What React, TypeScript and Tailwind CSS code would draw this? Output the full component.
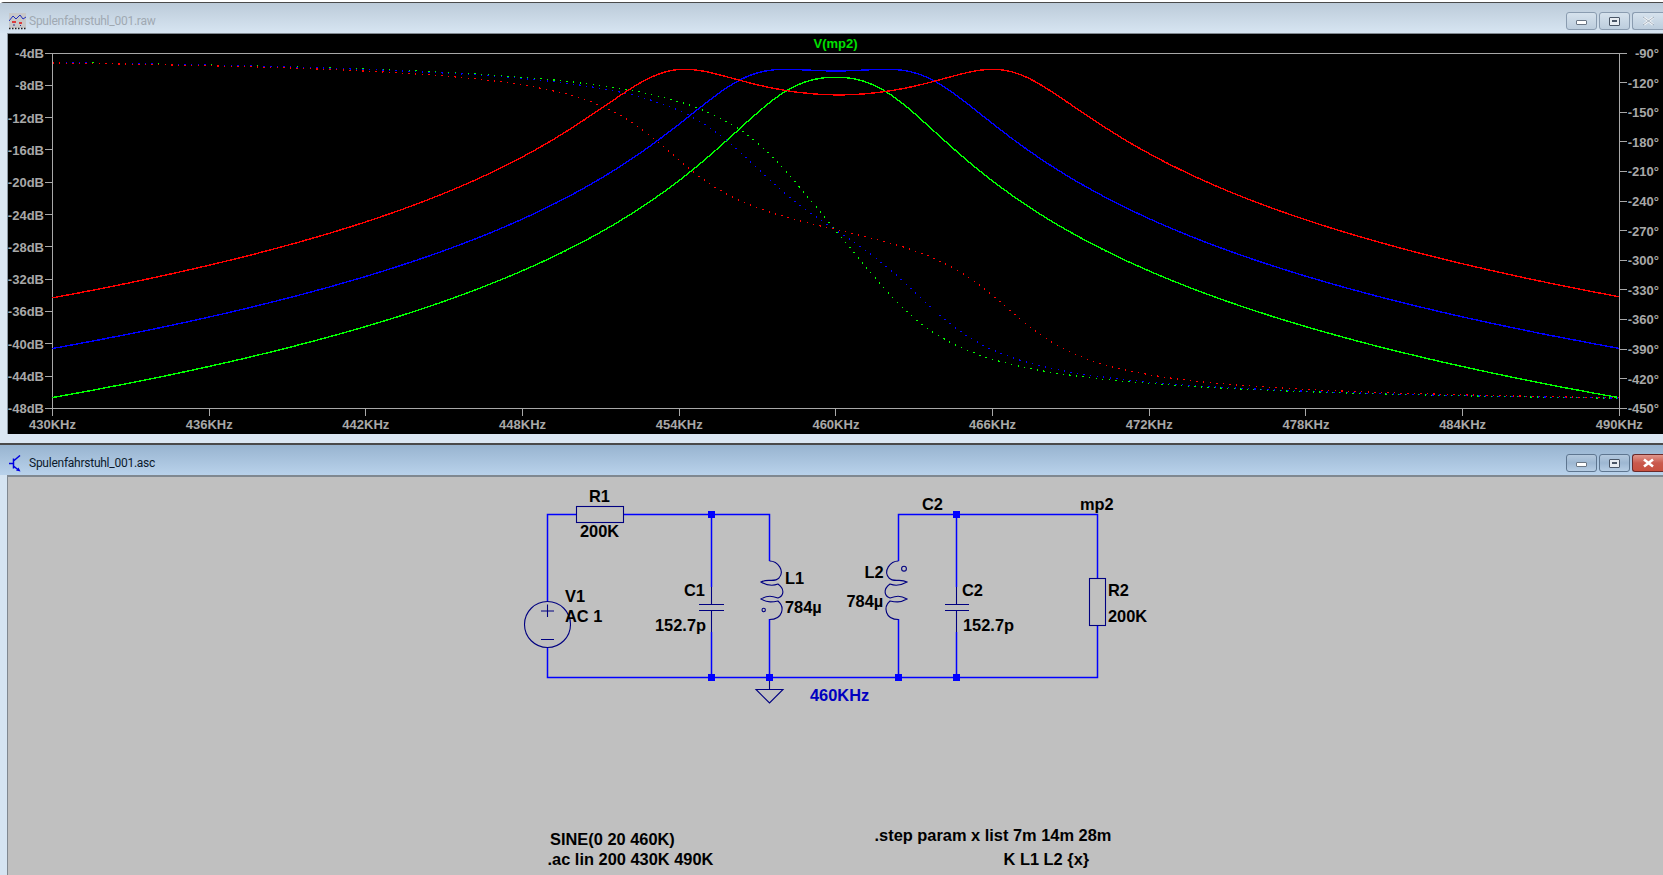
import React from 'react';

// --- AC response of the coupled tank circuit, same values as the schematic ---
const R = 200e3;
const C = 152.7e-12;
const L = 784e-6;

type Pt = { x: number; db: number; deg: number };

function sweep(k: number, n: number): Pt[] {
  const out: Pt[] = [];
  const M = k * L;
  const det = L * L - M * M;
  let prev: number | null = null;
  for (let i = 0; i <= n; i++) {
    const f = 430e3 + (60e3 * i) / n;
    const w = 2 * Math.PI * f;
    // Ya = 1/R + j(wC - G11/w), Yb = j(M/det)/w
    const yaIm = w * C - L / det / w;
    const yaRe = 1 / R;
    const ybIm = M / det / w;
    // Vb = Yb/R / (Ya^2 - Yb^2)
    const dRe = yaRe * yaRe - yaIm * yaIm + ybIm * ybIm;
    const dIm = 2 * yaRe * yaIm;
    const nIm = ybIm / R;
    const den = dRe * dRe + dIm * dIm;
    const vRe = (nIm * dIm) / den;
    const vIm = (nIm * dRe) / den;
    const db = 20 * Math.log10(Math.hypot(vRe, vIm));
    let deg = (Math.atan2(vIm, vRe) * 180) / Math.PI;
    if (prev !== null) {
      while (deg - prev > 180) deg -= 360;
      while (deg - prev < -180) deg += 360;
    } else {
      while (deg > -60) deg -= 360;
      while (deg < -400) deg += 360;
    }
    prev = deg;
    out.push({ x: i / n, db, deg });
  }
  return out;
}

const PX0 = 52.5;
const PX1 = 1619.3;
const PY0 = 53;
const PY1 = 408.3;
const sx = (t: number) => PX0 + t * (PX1 - PX0);
const dbY = (d: number) => PY0 + ((-4 - d) / 44) * (PY1 - PY0);
const degY = (d: number) => PY0 + ((-90 - d) / 360) * (PY1 - PY0);

const traces = [
  { k: 0.007, color: '#00ff00' },
  { k: 0.014, color: '#0000ff' },
  { k: 0.028, color: '#ff0000' },
];

const dbLabels = [-4, -8, -12, -16, -20, -24, -28, -32, -36, -40, -44, -48];
const degLabels = [-90, -120, -150, -180, -210, -240, -270, -300, -330, -360, -390, -420, -450];
const freqLabels = [430, 436, 442, 448, 454, 460, 466, 472, 478, 484, 490];

const axisFont = { fontFamily: '"Liberation Sans", Arial, sans-serif' };

function Plot() {
  return (
    <svg width="1663" height="400" viewBox="0 34 1663 400" className="block absolute left-[-8px] top-0" style={axisFont}>
      <g stroke="#a8a8a8" strokeWidth="1" shapeRendering="crispEdges">
        <line x1="45" y1="53" x2="1627" y2="53" />
        <line x1="45" y1="408.5" x2="1627" y2="408.5" />
        <line x1="52.5" y1="53" x2="52.5" y2="416" />
        <line x1="1619.5" y1="53" x2="1619.5" y2="416" />
        {dbLabels.map((d) => (
          <line key={d} x1="45" x2="52" y1={dbY(d)} y2={dbY(d)} />
        ))}
        {degLabels.map((d) => (
          <line key={d} x1="1620" x2="1627" y1={degY(d)} y2={degY(d)} />
        ))}
        {freqLabels.map((f) => {
          const x = sx((f - 430) / 60);
          return <line key={f} x1={x} x2={x} y1="408" y2="416" />;
        })}
      </g>
      <g fill="#a8a8a8" fontSize="13" fontWeight="700">
        {dbLabels.map((d) => (
          <text key={d} x="44" y={dbY(d) + 5} textAnchor="end">{d}dB</text>
        ))}
        {degLabels.map((d) => (
          <text key={d} x="1659" y={degY(d) + 5} textAnchor="end">{d}°</text>
        ))}
        {freqLabels.map((f) => (
          <text key={f} x={sx((f - 430) / 60)} y="429" textAnchor="middle">{f}KHz</text>
        ))}
      </g>
      <text x="835.5" y="48" textAnchor="middle" fontSize="13" fontWeight="700" fill="#00e000">V(mp2)</text>

      {traces.map((t) => {
        const dense = sweep(t.k, 1500);
        const mag = dense.map((p) => `${sx(p.x).toFixed(1)},${dbY(p.db).toFixed(1)}`).join(' ');
        const phase = dense.map((p) => `${sx(p.x).toFixed(1)},${degY(p.deg).toFixed(1)}`).join(' ');
        return (
          <g key={t.k} fill="none" stroke={t.color} shapeRendering="crispEdges">
            <polyline points={mag} strokeWidth="1.4" />
            <polyline points={phase} strokeWidth="1.2" strokeDasharray="1.4 5.2" />
          </g>
        );
      })}
    </svg>
  );
}

const wire = '#0000ff';
const part = '#000080';

const labels: { x: number; y: number; s: string; anchor?: 'middle' | 'start'; color?: string }[] = [
  { x: 599.5, y: 502, s: 'R1', anchor: 'middle' },
  { x: 599.5, y: 537, s: '200K', anchor: 'middle' },
  { x: 565, y: 602, s: 'V1' },
  { x: 565, y: 622, s: 'AC 1' },
  { x: 684, y: 596, s: 'C1' },
  { x: 655, y: 631, s: '152.7p' },
  { x: 785, y: 584, s: 'L1' },
  { x: 785, y: 613, s: '784µ' },
  { x: 810, y: 701, s: '460KHz', color: '#0000c0' },
  { x: 922, y: 510, s: 'C2' },
  { x: 1080, y: 510, s: 'mp2' },
  { x: 864.5, y: 578, s: 'L2' },
  { x: 846.5, y: 607, s: '784µ' },
  { x: 962, y: 596, s: 'C2' },
  { x: 963, y: 631, s: '152.7p' },
  { x: 1108, y: 596, s: 'R2' },
  { x: 1108, y: 622, s: '200K' },
  { x: 550, y: 845, s: 'SINE(0 20 460K)' },
  { x: 547.5, y: 865, s: '.ac lin 200 430K 490K' },
  { x: 874.5, y: 841, s: '.step param x list 7m 14m 28m' },
  { x: 1003.5, y: 865, s: 'K L1 L2 {x}' },
];

function Schematic() {
  return (
    <svg width="1663" height="398" viewBox="0 477 1663 398" className="block absolute left-[-8px] top-0" style={axisFont}>
      {/* wires */}
      <g fill="none" stroke={wire} strokeWidth="1.5">
        <path d="M576 514.5H547.5V601M547.5 648V677.5H1097.5V626M1097.5 578V514.5H898.5V561M898.5 619V677.5" />
        <path d="M624 514.5H769.5V561M769.5 619V677.5" />
        <path d="M711.5 514.5V587M711.5 632V677.5" />
        <path d="M956.5 514.5V587M956.5 632V677.5" />
      </g>
      {/* parts */}
      <g fill="none" stroke={part} strokeWidth="1.1">
        <rect x="576.5" y="506.5" width="47" height="16" />
        <rect x="1089.5" y="578.5" width="16" height="47" />
        <circle cx="547.5" cy="624.5" r="23" />
        <path d="M541 611H554M547.5 604.5V617M541 639.5H554" />
        <path d="M711.5 587V604.5M699 604.5H724M699 610.5H724M711.5 610.5V632" />
        <path d="M956.5 587V604.5M945 604.5H969M945 610.5H969M956.5 610.5V632" />
        <path d="M769.5 561C778 561 785 571 779 578C774 583 768 578 761 582C768 586 773 586 778 584C785 589 784 596 778 598C772 596 768 595 761 599C768 603 773 602 778 601C785 607 783 619.5 769.5 619.5" />
        <circle cx="763.7" cy="610" r="1.7" />
        <path d="M898.5 561C890 561 883 571 889 578C894 583 900 578 907 582C900 586 895 586 890 584C883 589 884 596 890 598C896 596 900 595 907 599C900 603 895 602 890 601C883 607 885 619.5 898.5 619.5" />
        <circle cx="904" cy="568.7" r="2.4" />
        <path d="M769.5 677.5V689.5M756 689.5H783L769.5 703Z" />
      </g>
      {/* junctions */}
      <g fill={wire}>
        <rect x="708" y="511" width="7" height="7" />
        <rect x="953" y="511" width="7" height="7" />
        <rect x="708" y="674" width="7" height="7" />
        <rect x="766" y="674" width="7" height="7" />
        <rect x="895" y="674" width="7" height="7" />
        <rect x="953" y="674" width="7" height="7" />
      </g>
      <g fontSize="16.4" fontWeight="700">
        {labels.map((l) => (
          <text key={l.s + l.x} x={l.x} y={l.y} textAnchor={l.anchor ?? 'start'} fill={l.color ?? '#000000'}>{l.s}</text>
        ))}
      </g>
    </svg>
  );
}

function RawIcon() {
  return (
    <svg width="17" height="17" viewBox="0 0 17 17" className="shrink-0">
      <rect x="0" y="0" width="17" height="15" fill="#c8c8c8" />
      <path d="M0 8L4 3L7 6L11 2L14 6L17 4" fill="none" stroke="#2030c0" strokeWidth="1" />
      <path d="M3 9H7M10 10H13" stroke="#e01010" strokeWidth="1.4" />
      <path d="M4 12H6M11 12.5H12" stroke="#303090" strokeWidth="1" />
      <path d="M0 15.5H17" stroke="#202020" strokeWidth="1.4" strokeDasharray="1.5 1.5" />
    </svg>
  );
}

function AscIcon() {
  return (
    <svg width="12" height="17" viewBox="0 0 12 17" className="shrink-0">
      <path d="M0 8.5H4M4.5 3.5V13.5M4.5 6L11 0.5M4.5 11L10 15.5" fill="none" stroke="#0000e0" strokeWidth="1.5" />
      <path d="M11.5 16.5L7 15.5L9.5 12.5Z" fill="#0000e0" />
    </svg>
  );
}

function CaptionButton({ kind, active }: { kind: 'min' | 'max' | 'close'; active: boolean }) {
  if (kind === 'close') {
    return (
      <div className={`w-[31px] h-[18px] rounded-l-[3px] border border-r-0 flex items-center justify-center ${active ? 'border-[#6b2a2a] bg-gradient-to-b from-[#e0968c] via-[#c9594d] to-[#c8503f]' : 'border-[#8a9cb0] bg-gradient-to-b from-[#d6e2ed] to-[#bccddd]'}`}>
        <svg width="13" height="10" viewBox="0 0 13 10">
          <path d="M2 1.5L11 8.5M11 1.5L2 8.5" stroke={active ? '#ffffff' : '#eef2f6'} strokeWidth="2.6" />
          {!active && <path d="M1 1L12 9M12 1L1 9" stroke="#6f7f90" strokeWidth="0.5" />}
        </svg>
      </div>
    );
  }
  return (
    <div className={`w-[31px] h-[18px] rounded-[3px] border flex items-center justify-center ${active ? 'border-[#5e7690] bg-gradient-to-b from-[#b4c9de] via-[#9db7d2] to-[#b6cde4]' : 'border-[#8a9cb0] bg-gradient-to-b from-[#d6e2ed] to-[#bccddd]'}`}>
      {kind === 'min' ? (
        <div className="w-[11px] h-[5px] mt-[3px] bg-white border border-[#6a7684] rounded-[1px]" />
      ) : (
        <div className="w-[11px] h-[9px] bg-[#e8edf2] border border-[#4a5666] rounded-[1px] flex items-center justify-center">
          <div className="w-[5px] h-[2px] bg-[#4a5666]" />
        </div>
      )}
    </div>
  );
}

function TitleBar({ title, active, icon }: { title: string; active: boolean; icon: React.ReactNode }) {
  return (
    <div className={`h-[30px] shrink-0 flex items-center pl-[9px] pt-[6px] ${active ? 'bg-gradient-to-b from-[#98b4d0] to-[#b9d2eb]' : 'bg-gradient-to-b from-[#bccbd9] to-[#d7e5f2]'}`}>
      <div className="w-[20px] flex items-center">{icon}</div>
      <span className={`text-[12px] tracking-[-0.25px] font-['Roboto',sans-serif] ${active ? 'text-[#0c1a2c]' : 'text-[#a0a9b2]'}`}>{title}</span>
      <div className="ml-auto flex gap-[2px] items-center">
        <CaptionButton kind="min" active={active} />
        <CaptionButton kind="max" active={active} />
        <CaptionButton kind="close" active={active} />
      </div>
    </div>
  );
}

export default function App() {
  return (
    <div className="w-[1663px] h-[875px] overflow-hidden bg-white flex flex-col">
      {/* waveform window */}
      <div className="h-[443px] shrink-0 mt-[2px] border-t border-b-2 border-[#4a4a4a] rounded-tl-[4px] bg-[#dbe7f3] flex flex-col">
        <TitleBar title="Spulenfahrstuhl_001.raw" active={false} icon={<RawIcon />} />
        <div className="flex-1 flex min-h-0 pb-[9px]">
          <div className="w-[8px] shrink-0 border-r border-[#8d98a3]" />
          <div className="flex-1 relative bg-black overflow-hidden border-t border-[#808890]">
            <Plot />
          </div>
        </div>
      </div>

      {/* schematic window */}
      <div className="flex-1 min-h-0 bg-[#c6d9ec] flex flex-col">
        <TitleBar title="Spulenfahrstuhl_001.asc" active icon={<AscIcon />} />
        <div className="flex-1 flex min-h-0">
          <div className="w-[8px] shrink-0 bg-[#d5e4f2] border-r border-[#808890]" />
          <div className="flex-1 relative bg-[#c0c0c0] overflow-hidden border-t-2 border-[#808890]">
            <Schematic />
          </div>
        </div>
      </div>
    </div>
  );
}
